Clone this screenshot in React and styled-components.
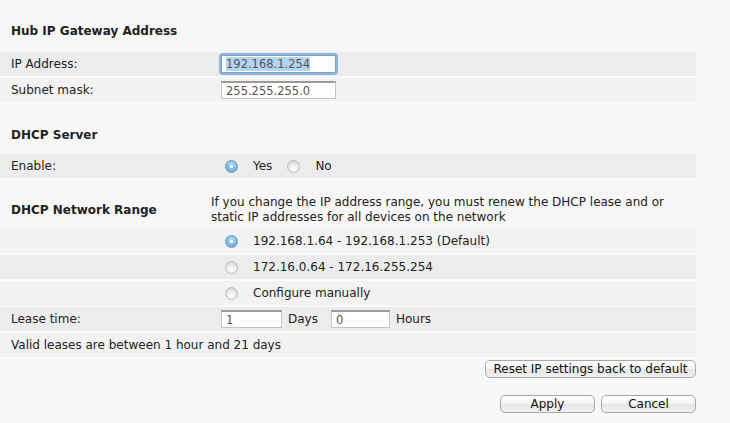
import React, { useEffect, useRef, useState } from "react";
import styled, { createGlobalStyle } from "styled-components";

const Global = createGlobalStyle`
  html, body {
    margin: 0;
    padding: 0;
    background: #f7f7f7;
  }
  body {
    font-family: "DejaVu Sans", Verdana, sans-serif;
    font-size: 12px;
    color: #222;
  }
`;

const Page = styled.div`
  width: 696px;
  padding-top: 19px;
`;

const Heading = styled.div`
  font-weight: bold;
  line-height: 24px;
  padding-left: 11px;
  margin-top: ${({ $top }) => $top || 0}px;
  margin-bottom: ${({ $bottom }) => $bottom || 0}px;
`;

const Row = styled.div`
  display: flex;
  align-items: center;
  height: 24px;
  border-bottom: 2px solid #fafafa;
  background: ${({ $dark }) => ($dark ? "#ececec" : "#f2f2f2")};
`;

const Label = styled.div`
  width: ${({ $wide }) => ($wide ? "auto" : "211px")};
  padding-left: 11px;
  box-sizing: border-box;
  flex: none;
`;

const Value = styled.div`
  display: flex;
  align-items: center;
  padding-left: ${({ $indent }) => $indent ?? 10}px;
`;

const RangeHead = styled.div`
  display: flex;
  align-items: center;
  margin-top: 15px;
  margin-bottom: 4px;
`;

const RangeTitle = styled.div`
  width: 211px;
  padding-left: 11px;
  box-sizing: border-box;
  font-weight: bold;
  flex: none;
`;

const Desc = styled.div`
  line-height: 15px;
  width: 480px;
`;

const Input = styled.input`
  box-sizing: border-box;
  width: ${({ $w }) => $w}px;
  height: 18px;
  padding: 0 4px;
  margin: 0;
  font-family: "DejaVu Sans", Verdana, sans-serif;
  font-size: 11.5px;
  color: #555;
  background: #fff;
  border: 1px solid #c4c4c4;
  border-top: 2px solid #9a9a9a;
  outline: none;
  &::selection {
    background: #b5d3f3;
  }
`;

const FocusInput = styled(Input)`
  border: 1px solid #7aa3d2;
  box-shadow: 0 0 0 2px #8cb4e0;
  border-radius: 2px;
`;

const Unit = styled.span`
  margin: 0 13px 0 6px;
`;

const Radio = styled.span`
  display: inline-block;
  width: 13px;
  height: 13px;
  border-radius: 50%;
  flex: none;
  box-sizing: border-box;
  position: relative;
  margin-right: 15px;
  background: ${({ $on }) =>
    $on
      ? "radial-gradient(circle at 50% 35%, #bfdcf2 0%, #83b6de 55%, #5d9acb 100%)"
      : "radial-gradient(circle at 50% 72%, #ffffff 0%, #ececec 45%, #c9c9c9 100%)"};
  border: 1px solid ${({ $on }) => ($on ? "#6d9cc6" : "#bdbdbd")};
  &::after {
    content: "";
    display: ${({ $on }) => ($on ? "block" : "none")};
    position: absolute;
    left: 4px;
    top: 4px;
    width: 3px;
    height: 3px;
    border-radius: 50%;
    background: #fff;
  }
`;

const Option = styled.span`
  display: inline-flex;
  align-items: center;
  margin-right: 15px;
`;

const Actions = styled.div`
  display: flex;
  justify-content: flex-end;
  gap: 6px;
  margin-top: ${({ $top }) => $top}px;
`;

const Button = styled.button`
  box-sizing: border-box;
  width: ${({ $w }) => $w}px;
  height: 18px;
  padding: 0;
  font-family: "DejaVu Sans", "Lucida Grande", sans-serif;
  font-size: 12px;
  color: #111;
  background: linear-gradient(#ffffff 0%, #f3f3f3 50%, #e6e6e6 51%, #f0f0f0 100%);
  border: 1px solid #a8a8a8;
  border-radius: 5px;
`;

export default function App() {
  const [dhcp, setDhcp] = useState("yes");
  const [range, setRange] = useState(0);
  const ipRef = useRef(null);

  useEffect(() => {
    if (ipRef.current) {
      ipRef.current.focus();
      ipRef.current.select();
    }
  }, []);

  const ranges = [
    "192.168.1.64 - 192.168.1.253 (Default)",
    "172.16.0.64 - 172.16.255.254",
    "Configure manually",
  ];

  return (
    <Page>
      <Global />
      <Heading $bottom={9}>Hub IP Gateway Address</Heading>
      <Row $dark>
        <Label>IP Address:</Label>
        <Value>
          <FocusInput ref={ipRef} $w={115} defaultValue="192.168.1.254" />
        </Value>
      </Row>
      <Row>
        <Label>Subnet mask:</Label>
        <Value>
          <Input $w={115} defaultValue="255.255.255.0" />
        </Value>
      </Row>

      <Heading $top={19} $bottom={7}>DHCP Server</Heading>
      <Row $dark>
        <Label>Enable:</Label>
        <Value $indent={14}>
          <Option onClick={() => setDhcp("yes")}>
            <Radio $on={dhcp === "yes"} />
            Yes
          </Option>
          <Option onClick={() => setDhcp("no")}>
            <Radio $on={dhcp === "no"} />
            No
          </Option>
        </Value>
      </Row>

      <RangeHead>
        <RangeTitle>DHCP Network Range</RangeTitle>
        <Desc>
          If you change the IP address range, you must renew the DHCP lease and or
          static IP addresses for all devices on the network
        </Desc>
      </RangeHead>
      {ranges.map((r, i) => (
        <Row key={r} $dark={i % 2 === 1}>
          <Label />
          <Value $indent={14}>
            <Option onClick={() => setRange(i)}>
              <Radio $on={range === i} />
              {r}
            </Option>
          </Value>
        </Row>
      ))}
      <Row $dark>
        <Label>Lease time:</Label>
        <Value>
          <Input $w={61} defaultValue="1" />
          <Unit>Days</Unit>
          <Input $w={59} defaultValue="0" />
          <Unit>Hours</Unit>
        </Value>
      </Row>
      <Row>
        <Label $wide>Valid leases are between 1 hour and 21 days</Label>
      </Row>

      <Actions $top={1}>
        <Button $w={211}>Reset IP settings back to default</Button>
      </Actions>
      <Actions $top={17}>
        <Button $w={95}>Apply</Button>
        <Button $w={95}>Cancel</Button>
      </Actions>
    </Page>
  );
}
